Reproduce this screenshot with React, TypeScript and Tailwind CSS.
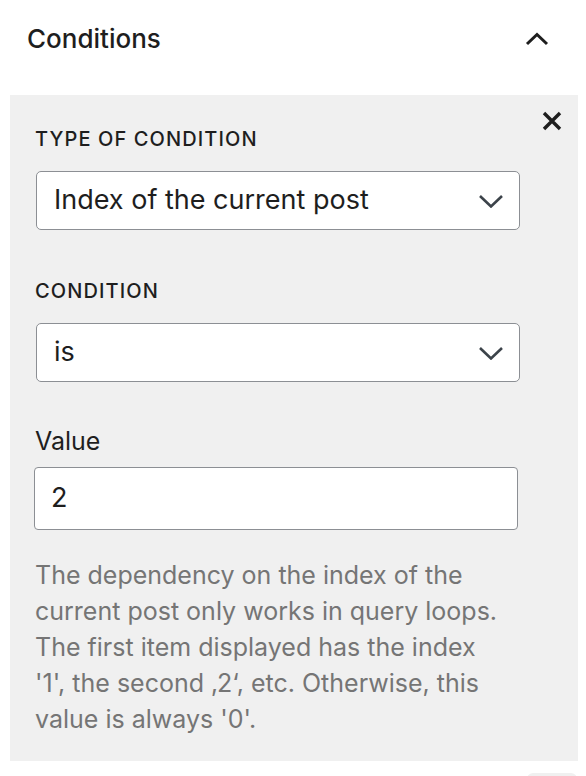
import React from "react";

function Chevron() {
  return (
    <svg width="26" height="14" viewBox="0 0 26 14" className="absolute right-[15px] top-1/2 -translate-y-1/2">
      <polyline points="2,2 13,12.5 24,2" fill="none" stroke="#3c434a" strokeWidth="2.6" />
    </svg>
  );
}

export default function App() {
  return (
    <div className="w-[586px] h-[776px] bg-white overflow-hidden font-['Inter','Liberation_Sans',sans-serif] text-[#1e1e1e]">
      <div className="h-[78px] flex items-center justify-between pl-[27px] pr-[37px]">
        <span className="text-[26px] font-medium leading-[30px]">Conditions</span>
        <svg width="24" height="14" viewBox="0 0 24 14">
          <polyline points="2,12 12,2.5 22,12" fill="none" stroke="#1e1e1e" strokeWidth="3" />
        </svg>
      </div>
      <div className="relative mt-[17px] ml-[10px] w-[568px] bg-[#f0f0f0] pt-[32px] pb-[24px] pl-[25px]">
        <svg width="22" height="22" viewBox="0 0 22 22" className="absolute right-[15px] top-[15px]">
          <path d="M3 3 L19 19 M19 3 L3 19" stroke="#1e1e1e" strokeWidth="3.4" />
        </svg>
        <div className="text-[20px] leading-[24px] font-medium uppercase tracking-[1.1px]">Type of condition</div>
        <div className="relative mt-[20px] ml-[1px] w-[484px] h-[59px] bg-white border-[1.5px] border-[#8c8f94] rounded-[5px] flex items-center pl-[17px] text-[27px]">
          Index of the current post
          <Chevron />
        </div>
        <div className="mt-[49px] text-[20px] leading-[24px] font-medium uppercase tracking-[1.1px]">Condition</div>
        <div className="relative mt-[20px] ml-[1px] w-[484px] h-[59px] bg-white border-[1.5px] border-[#8c8f94] rounded-[5px] flex items-center pl-[17px] text-[27px]">
          is
          <Chevron />
        </div>
        <div className="mt-[45px] text-[25px] leading-[28px]">Value</div>
        <div className="mt-[12px] -ml-[1px] w-[484px] h-[63px] bg-white border-[1.5px] border-[#8c8f94] rounded-[4px] flex items-center pl-[16px] text-[27px]">
          2
        </div>
        <p className="mt-[27px] w-[520px] whitespace-nowrap text-[25px] leading-[36px] text-[#757575]">
          The dependency on the index of the<br />
          current post only works in query loops.<br />
          The first item displayed has the index<br />
          '1', the second ‚2‘, etc. Otherwise, this<br />
          value is always '0'.
        </p>
      </div>
      <div className="mt-[12px] ml-[527px] w-[50px] h-[10px] bg-[#f0f0f0] rounded-t-[6px]" />
    </div>
  );
}
